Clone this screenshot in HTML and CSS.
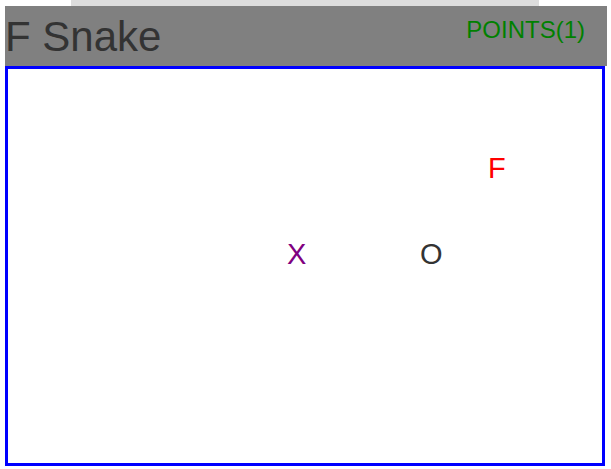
FILE: index.html
```html
<!DOCTYPE html>
<html>
<head>
<meta charset="utf-8">
<link rel="stylesheet" href="styles.css">
</head>
<body>
<div class="topstrip"></div>
<header class="header">
  <h1 class="title">F Snake</h1>
  <div class="points">POINTS(1)</div>
</header>
<div class="board">
  <span class="cell food" style="left:480px;top:82px">F</span>
  <span class="cell body" style="left:279px;top:168px">X</span>
  <span class="cell head" style="left:412px;top:168px">O</span>
</div>
</body>
</html>
```
FILE: styles.css
```css
html, body {
  margin: 0;
  padding: 0;
  background: #fff;
  font-family: "Liberation Sans", Arial, sans-serif;
}
.topstrip {
  margin-left: 71px;
  width: 468px;
  height: 6px;
  background: #dddddd;
}
.header {
  margin-left: 5px;
  width: 602px;
  height: 60px;
  background: #808080;
  display: flex;
  justify-content: space-between;
  align-items: flex-start;
}
.title {
  margin: 0;
  padding-left: 0;
  font-size: 42px;
  font-weight: normal;
  line-height: 62px;
  color: #333333;
}
.points {
  margin-right: 22px;
  margin-top: 9px;
  font-size: 24px;
  line-height: 30px;
  color: #008000;
}
.board {
  position: relative;
  margin-left: 5px;
  width: 600px;
  height: 400px;
  box-sizing: border-box;
  border: 3px solid #0000ff;
  background: #fff;
}
.cell {
  position: absolute;
  font-size: 29px;
  line-height: 34px;
}
.food { color: #ff0000; }
.body { color: #800080; }
.head { color: #333333; }
```
